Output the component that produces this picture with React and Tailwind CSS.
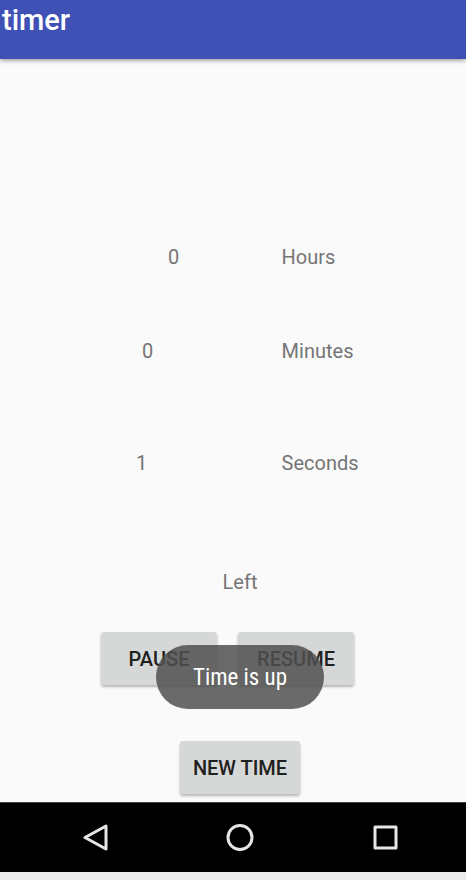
import React from "react";

const actionButton =
  "h-[53px] rounded-[3px] bg-[#d6d8d7] text-[20px] leading-6 font-medium text-[#1f2020] shadow-[0_2px_3px_rgba(0,0,0,0.28)]";

function TimeRow({ value, label, className }) {
  return (
    <div className={`grid grid-cols-[3fr_2fr] ${className}`}>
      <span>{value}</span>
      <span className="pl-0.5">{label}</span>
    </div>
  );
}

export default function App() {
  return (
    <div className="flex min-h-screen flex-col bg-[#ececed] font-['Roboto',sans-serif]">
      <header className="relative z-10 h-[59px] bg-[#3f51b5] pt-1 pl-[2px] shadow-[0_1px_5px_rgba(0,0,0,0.45)]">
        <h1 className="text-[29px] leading-8 font-medium text-white">timer</h1>
      </header>

      <main className="relative flex-1 bg-[#fafafa] pt-[186px] pb-2 text-[20px] leading-6 text-[#757575]">
        <TimeRow value="0" label="Hours" className="mb-[70px] [&>:first-child]:pl-[168px]" />
        <TimeRow value="0" label="Minutes" className="mb-[88px] [&>:first-child]:pl-[142px]" />
        <TimeRow value="1" label="Seconds" className="mb-[95px] [&>:first-child]:pl-[136px]" />
        <p className="pl-3.5 text-center">Left</p>

        <div className="mt-[38px] flex justify-center gap-[21px] pr-[11px]">
          <button type="button" className={`w-[116px] ${actionButton}`}>PAUSE</button>
          <button type="button" className={`w-[116px] ${actionButton}`}>RESUME</button>
        </div>
        <div className="mt-14 flex justify-center pl-3.5">
          <button type="button" className={`w-[120px] ${actionButton}`}>NEW TIME</button>
        </div>

        <div className="pointer-events-none absolute inset-x-0 bottom-[93px] flex justify-center pl-3.5">
          <div
            role="status"
            className="flex h-16 w-[168px] items-center justify-center rounded-full bg-[#505050]/85 pt-0.5 font-['Roboto_Condensed','Roboto',sans-serif] text-[23px] text-white"
          >
            Time is up
          </div>
        </div>
      </main>

      <nav className="mb-2 flex h-[70px] items-center justify-center border-t border-[#444444] bg-black pl-3.5">
        <button type="button" aria-label="Back" className="flex w-[145px] justify-center">
          <svg width="28" height="28" viewBox="0 0 28 28" fill="none" stroke="#e6e6e6" strokeWidth="3" strokeLinejoin="round">
            <path d="M25 2V25L4 13.5Z" />
          </svg>
        </button>
        <button type="button" aria-label="Home" className="flex w-[145px] justify-center">
          <svg width="28" height="28" viewBox="0 0 28 28" fill="none" stroke="#e6e6e6" strokeWidth="3">
            <circle cx="14" cy="13.5" r="12" />
          </svg>
        </button>
        <button type="button" aria-label="Overview" className="flex w-[145px] justify-center">
          <svg width="28" height="28" viewBox="0 0 28 28" fill="none" stroke="#e6e6e6" strokeWidth="3" strokeLinejoin="round">
            <rect x="4" y="3" width="21" height="21" />
          </svg>
        </button>
      </nav>
    </div>
  );
}
